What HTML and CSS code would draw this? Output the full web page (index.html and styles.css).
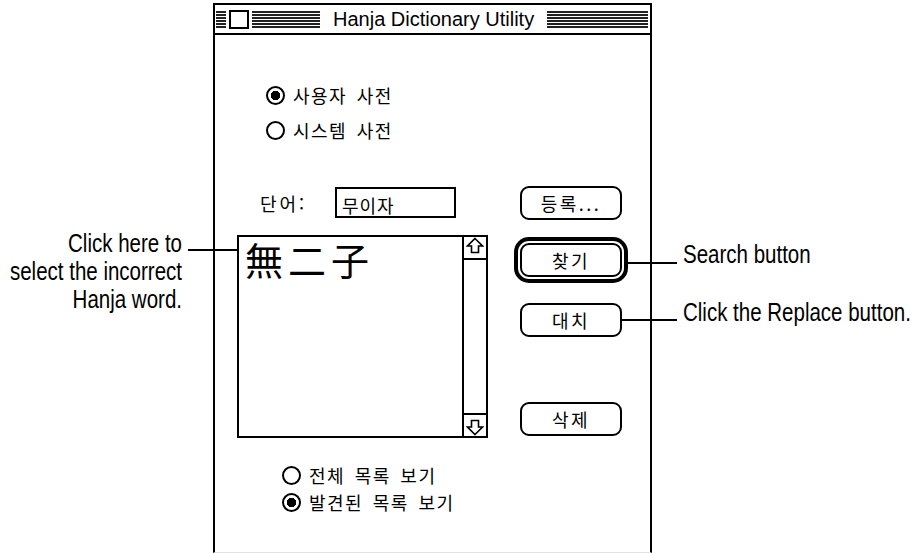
FILE: index.html
```html
<!DOCTYPE html>
<html lang="ko">
<head>
  <meta charset="UTF-8">
  <title>Hanja Dictionary Utility</title>
  <link rel="stylesheet" href="styles.css">
</head>
<body>

  <div class="stage">
    <div class="window">
      <div class="titlebar">
        <span class="stripes stripes-left"></span>
        <span class="close-box"></span>
        <span class="stripes stripes-mid"></span>
        <span class="title">Hanja Dictionary Utility</span>
        <span class="stripes stripes-right"></span>
      </div>

      <div class="window-body">
        <div class="radio-group top-radios">
          <div class="radio-row"><span class="radio on"></span><span>사용자 사전</span></div>
          <div class="radio-row"><span class="radio"></span><span>시스템 사전</span></div>
        </div>

        <div class="main">
          <div class="word-row">
            <span class="word-label">단어:</span>
            <div class="word-field">무이자</div>
          </div>
          <div class="btn">등록...</div>

          <div class="list-box">
            <div class="list-items">無二子</div>
            <div class="scrollbar">
              <div class="scroll-btn up">
                <svg width="18" height="17" viewBox="0 0 18 17"><path d="M9 1.5 L16.5 9 H12.5 V15.5 H5.5 V9 H1.5 Z" fill="none" stroke="#000" stroke-width="1.6" stroke-linejoin="miter"/></svg>
              </div>
              <div class="scroll-track"></div>
              <div class="scroll-btn down">
                <svg width="18" height="17" viewBox="0 0 18 17"><path d="M9 15.5 L16.5 8 H12.5 V1.5 H5.5 V8 H1.5 Z" fill="none" stroke="#000" stroke-width="1.6" stroke-linejoin="miter"/></svg>
              </div>
            </div>
          </div>

          <div class="btn-stack">
            <div class="btn btn-default">찾기</div>
            <div class="btn btn-replace">대치</div>
            <div class="btn btn-delete">삭제</div>
          </div>
        </div>

        <div class="radio-group bottom-radios">
          <div class="radio-row"><span class="radio"></span><span>전체 목록 보기</span></div>
          <div class="radio-row"><span class="radio on"></span><span>발견된 목록 보기</span></div>
        </div>
      </div>
    </div>

    <!-- callouts -->
    <div class="callout callout-left">Click here to<br>select the incorrect<br>Hanja word.</div>
    <div class="leader leader-left"></div>
    <div class="callout callout-search">Search button</div>
    <div class="leader leader-search"></div>
    <div class="callout callout-replace">Click the Replace button.</div>
    <div class="leader leader-replace"></div>
  </div>

</body>
</html>
```

FILE: styles.css
```css
body {
  margin: 0;
  background-color: #ffffff;
  color: #000000;
  font-family: 'Liberation Sans', Arial, sans-serif;
}

.stage {
  position: relative;
  width: 916px;
  height: 553px;
  overflow: hidden;
}

/* window frame */
.window {
  box-sizing: border-box;
  width: 439px;
  height: 550px;
  margin: 3px 0 0 213px;
  border: 2px solid #000;
  border-bottom: 1px solid #e2e2e2;
  background: #fff;
}

.titlebar {
  display: flex;
  align-items: center;
  height: 28px;
  padding: 0 2px 0 1px;
  border-bottom: 2px solid #000;
}

.stripes {
  height: 17px;
  background: repeating-linear-gradient(to bottom, #222 0 2px, #fff 2px 3px);
}

.stripes-left {
  width: 10px;
}

.stripes-mid {
  width: 68px;
}

.stripes-right {
  flex: 1;
}

.close-box {
  box-sizing: border-box;
  width: 20px;
  height: 19px;
  margin: 0 3px;
  border: 2px solid #000;
  background: #fff;
}

.title {
  padding: 0 13px;
  font-size: 20px;
  line-height: 28px;
  white-space: nowrap;
}

/* dialog content */
.window-body {
  padding-top: 50px;
  font-family: 'Noto Sans CJK KR', sans-serif;
  font-size: 18px;
  letter-spacing: 1.5px;
  word-spacing: 3px;
}

.radio-group {
  display: flex;
  flex-direction: column;
}

.top-radios {
  margin-left: 51px;
  gap: 15px;
}

.bottom-radios {
  margin: 27px 0 0 67px;
  gap: 7px;
}

.radio-row {
  display: flex;
  align-items: center;
  gap: 8px;
  height: 20px;
  line-height: 20px;
}

.radio {
  box-sizing: border-box;
  width: 19px;
  height: 19px;
  border: 2px solid #000;
  border-radius: 50%;
  background: #fff;
}

.radio.on {
  background: radial-gradient(circle, #000 0 4.5px, #fff 5px);
}

.main {
  display: grid;
  grid-template-columns: 251px 102px;
  column-gap: 32px;
  row-gap: 15px;
  grid-template-rows: 35px 203px;
  margin: 45px 0 0 22px;
}

.word-row {
  display: flex;
  align-items: center;
  padding-left: 23px;
}

.word-label {
  width: 75px;
  letter-spacing: 3px;
}

.word-field {
  box-sizing: border-box;
  width: 121px;
  height: 31px;
  padding: 5px 0 0 5px;
  border: 2px solid #000;
  line-height: 22px;
  letter-spacing: 1px;
}

.btn {
  box-sizing: border-box;
  display: flex;
  align-items: center;
  justify-content: center;
  width: 102px;
  height: 34px;
  border: 2px solid #000;
  border-radius: 9px;
  background: #fff;
  letter-spacing: 2.5px;
  align-self: center;
}

.btn-stack {
  display: flex;
  flex-direction: column;
}

.btn-default {
  margin-top: 8px;
  box-shadow: 0 0 0 2px #fff, 0 0 0 6px #000;
}

.btn-replace {
  margin-top: 26px;
}

.btn-delete {
  margin-top: 65px;
}

.list-box {
  box-sizing: border-box;
  display: flex;
  border: 2px solid #000;
}

.list-items {
  flex: 1;
  padding: 3px 6px;
  font-size: 38px;
  line-height: 38px;
  letter-spacing: 5px;
}

.scrollbar {
  display: flex;
  flex-direction: column;
  width: 22px;
  border-left: 2px solid #000;
}

.scroll-btn {
  display: flex;
  justify-content: center;
  height: 21px;
}

.scroll-btn.up {
  align-items: flex-start;
  border-bottom: 2px solid #000;
}

.scroll-btn.down {
  align-items: flex-end;
  border-top: 2px solid #000;
}

.scroll-track {
  flex: 1;
}

/* annotations around the window; the manual's face is a narrow sans */
.callout {
  position: absolute;
  font-size: 25px;
  line-height: 28px;
  white-space: nowrap;
  transform: scaleX(0.82);
}

.callout-left {
  left: -58px;
  top: 229px;
  width: 240px;
  text-align: right;
  transform-origin: right top;
}

.callout-search {
  left: 683px;
  top: 240px;
  transform-origin: left top;
}

.callout-replace {
  left: 683px;
  top: 298px;
  transform-origin: left top;
}

.leader {
  position: absolute;
  height: 2px;
  background: #000;
}

.leader-left {
  left: 188px;
  top: 249px;
  width: 49px;
}

.leader-search {
  left: 628px;
  top: 262px;
  width: 49px;
}

.leader-replace {
  left: 622px;
  top: 319px;
  width: 55px;
}
```
